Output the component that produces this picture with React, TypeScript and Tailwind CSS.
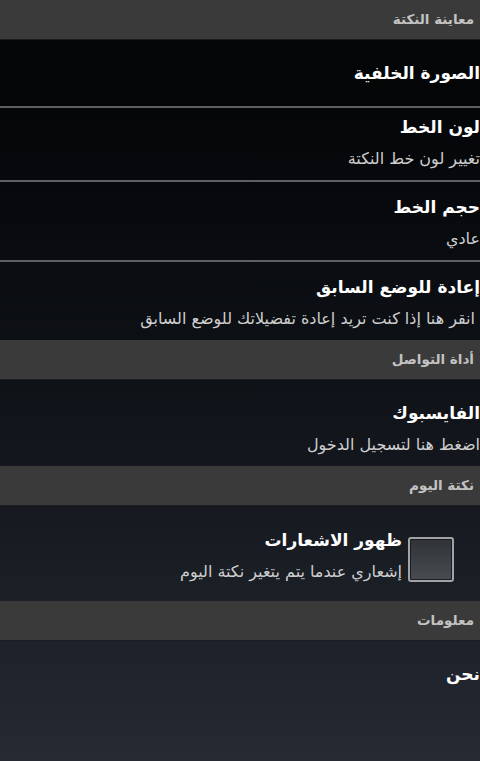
import React from "react";

const font = { fontFamily: '"DejaVu Sans", "Noto Sans", sans-serif' };

function Header({ text }: { text: string }) {
  return (
    <div className="h-[40px] bg-[#3a3a3a] flex items-center pr-[6px] border-b border-[#1b1e22]">
      <span className="text-[13.5px] font-bold text-[#c2c2c2] leading-none">{text}</span>
    </div>
  );
}

function Sep() {
  return <div className="h-[2px] bg-[#5c6064]" />;
}

function Item({
  title,
  sub,
  cls,
  subCls = "",
}: {
  title: string;
  sub?: string;
  cls: string;
  subCls?: string;
}) {
  return (
    <div className={cls}>
      <div className="text-[17px] font-bold text-white leading-[24px]">{title}</div>
      {sub && (
        <div className={"text-[16px] text-[#cfcfcf] leading-[20px] mt-[10px] " + subCls}>{sub}</div>
      )}
    </div>
  );
}

export default function App() {
  return (
    <div
      dir="rtl"
      style={font}
      className="w-[480px] h-[761px] overflow-hidden bg-gradient-to-b from-[#020304] via-[#0f1217] to-[#252a33]"
    >
      <Header text="معاينة النكتة" />
      <Item cls="h-[66px] pt-[21px] bg-[#040506]" title="الصورة الخلفية" />
      <Sep />
      <Item cls="h-[72px] pt-[7px]" title="لون الخط" sub="تغيير لون خط النكتة" />
      <Sep />
      <Item cls="h-[78px] pt-[13px]" title="حجم الخط" sub="عادي" />
      <Sep />
      <Item
        cls="h-[78px] pt-[13px]"
        title="إعادة للوضع السابق"
        sub="انقر هنا إذا كنت تريد إعادة تفضيلاتك للوضع السابق"
        subCls="pr-[5px]"
      />
      <Header text="أداة التواصل" />
      <Item cls="h-[86px] pt-[21px]" title="الفايسبوك" sub="اضغط هنا لتسجيل الدخول" />
      <Header text="نكتة اليوم" />
      <div className="h-[95px] flex items-start">
        <div className="pt-[31px] pr-[26px]">
          <div className="w-[46px] h-[45px] rounded-[3px] border-2 border-[#a3a3a3] p-[1px]">
            <div className="w-full h-full rounded-[1px] bg-gradient-to-b from-[#303338] to-[#484b50]" />
          </div>
        </div>
        <div className="pt-[22px] pr-[6px]">
          <div className="text-[17px] font-bold text-white leading-[24px]">ظهور الاشعارات</div>
          <div className="text-[16px] text-[#cfcfcf] leading-[20px] mt-[10px]">
            إشعاري عندما يتم يتغير نكتة اليوم
          </div>
        </div>
      </div>
      <Header text="معلومات" />
      <Item cls="h-[66px] pt-[21px]" title="نحن" />
    </div>
  );
}
